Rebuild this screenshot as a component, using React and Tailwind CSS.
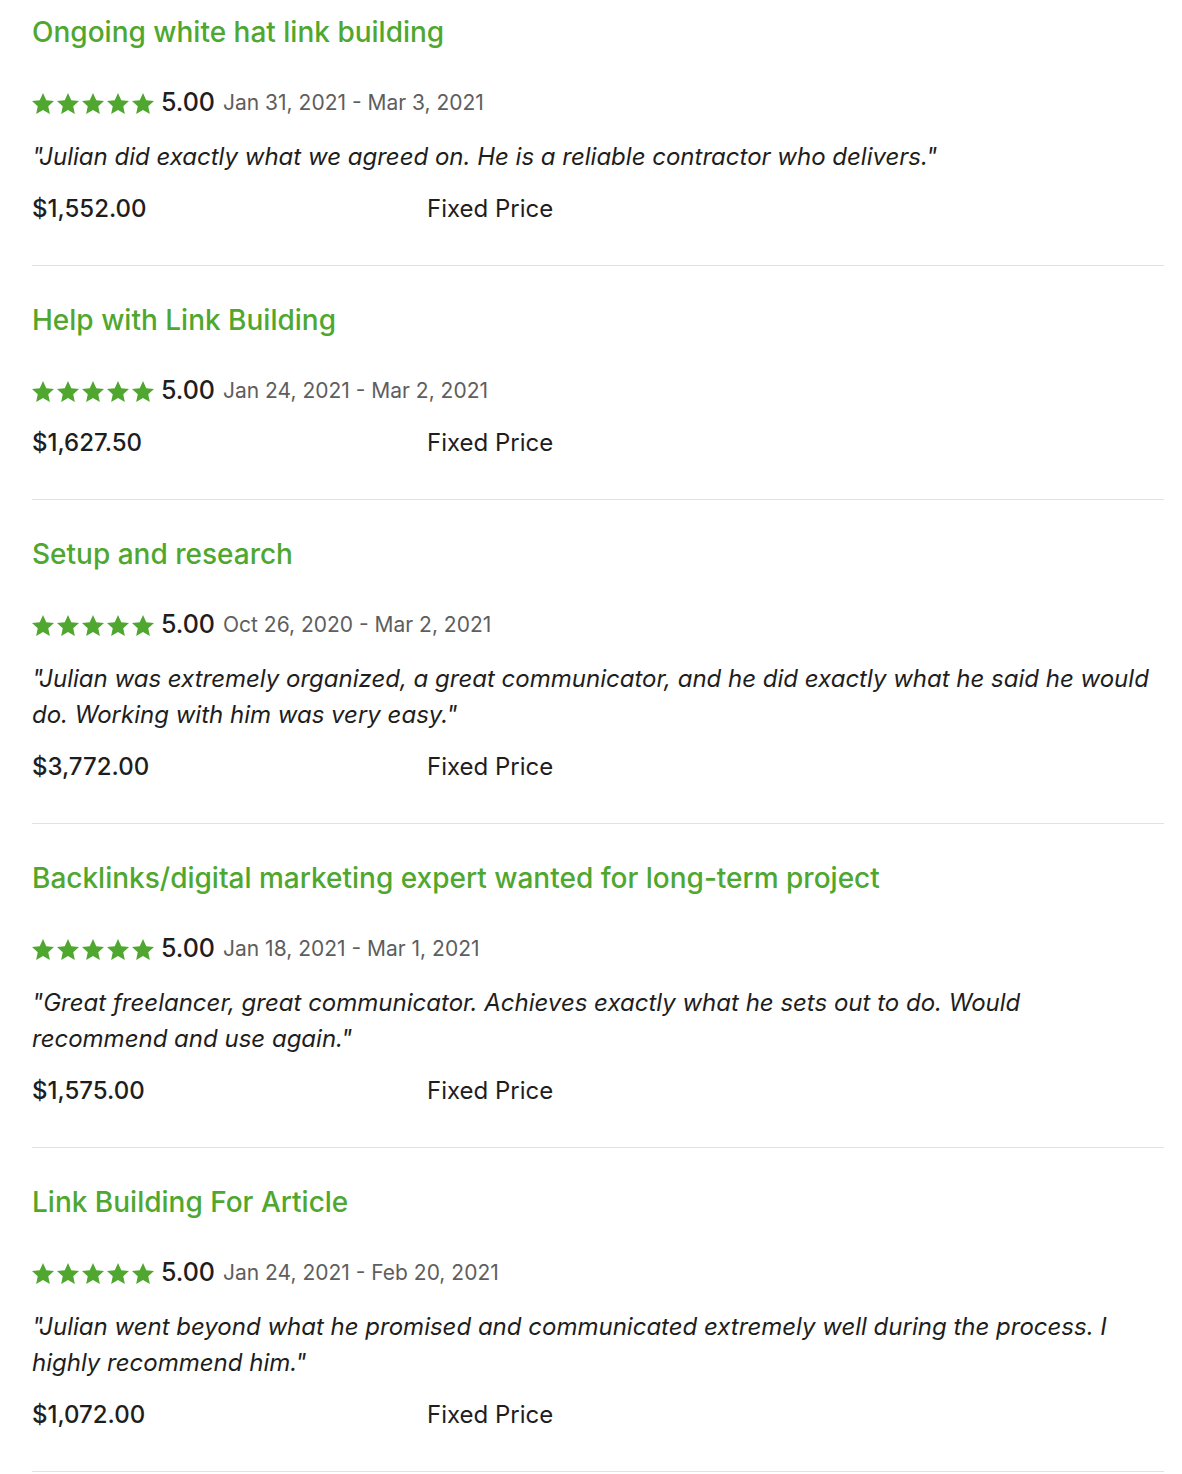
import React from "react"

const jobs = [
  {
    title: "Ongoing white hat link building",
    dates: "Jan 31, 2021 - Mar 3, 2021",
    quote: "\"Julian did exactly what we agreed on. He is a reliable contractor who delivers.\"",
    price: "$1,552.00",
  },
  {
    title: "Help with Link Building",
    dates: "Jan 24, 2021 - Mar 2, 2021",
    price: "$1,627.50",
  },
  {
    title: "Setup and research",
    dates: "Oct 26, 2020 - Mar 2, 2021",
    quote:
      "\"Julian was extremely organized, a great communicator, and he did exactly what he said he would do. Working with him was very easy.\"",
    price: "$3,772.00",
  },
  {
    title: "Backlinks/digital marketing expert wanted for long-term project",
    dates: "Jan 18, 2021 - Mar 1, 2021",
    quote:
      "\"Great freelancer, great communicator. Achieves exactly what he sets out to do. Would recommend and use again.\"",
    price: "$1,575.00",
  },
  {
    title: "Link Building For Article",
    dates: "Jan 24, 2021 - Feb 20, 2021",
    quote:
      "\"Julian went beyond what he promised and communicated extremely well during the process. I highly recommend him.\"",
    price: "$1,072.00",
  },
]

function Star() {
  return (
    <svg width="22" height="21" viewBox="0.9 0.8 22.2 21" className="shrink-0">
      <path
        d="M12 0.8l3.3 7.1 7.8 0.9-5.8 5.3 1.6 7.7L12 17.9l-6.9 3.9 1.6-7.7L0.9 8.8l7.8-0.9z"
        fill="#4fa72f"
      />
    </svg>
  )
}

function JobItem({ job, first }) {
  return (
    <div className={`border-b border-[#e2e2e2] pb-10 ${first ? "pt-4" : "pt-[38px]"}`}>
      <h3 className="text-[28px] leading-8 font-medium text-[#4fa72f]">{job.title}</h3>
      <div className="mt-[39px] flex items-center h-8">
        <div className="flex gap-[3px]">
          {[0, 1, 2, 3, 4].map((i) => (
            <Star key={i} />
          ))}
        </div>
        <span className="ml-[7px] text-[25px] font-medium text-[#1e1e1e]">5.00</span>
        <span className="ml-[8px] text-[21px] text-[#5e5e5e]">{job.dates}</span>
      </div>
      {job.quote && (
        <p className="mt-5 pr-[10px] text-[24px] leading-9 italic text-[#1e1e1e]">{job.quote}</p>
      )}
      <div className={`flex items-center h-8 text-[24px] text-[#1e1e1e] ${job.quote ? "mt-[18px]" : "mt-5"}`}>
        <span className="w-[395px] font-medium">{job.price}</span>
        <span>Fixed Price</span>
      </div>
    </div>
  )
}

export default function App() {
  return (
    <div className="bg-white min-h-screen pl-8 pr-[18px]" style={{ fontFamily: "Inter, 'Liberation Sans', sans-serif" }}>
      {jobs.map((job, i) => (
        <JobItem key={job.title} job={job} first={i === 0} />
      ))}
    </div>
  )
}
